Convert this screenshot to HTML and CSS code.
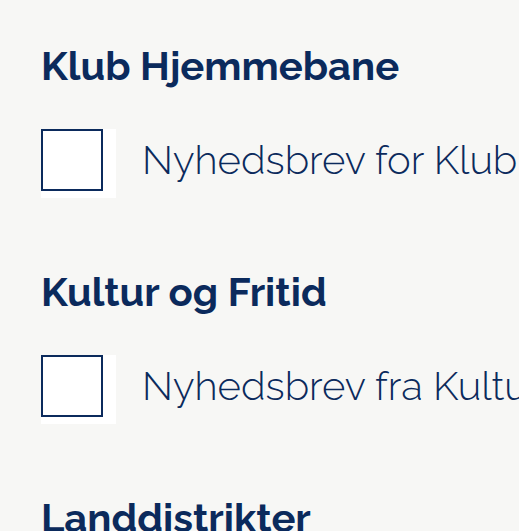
FILE: index.html
```html
<!DOCTYPE html>
<html lang="da">
<head>
<meta charset="utf-8">
<link rel="stylesheet" href="styles.css">
</head>
<body>
<div class="list">
  <section class="group">
    <h2 class="title">Klub Hjemmebane</h2>
    <label class="option">
      <span class="box-wrap"><span class="box"></span></span>
      <span class="label">Nyhedsbrev for Klub Hjemmebane</span>
    </label>
  </section>
  <section class="group">
    <h2 class="title">Kultur og Fritid</h2>
    <label class="option">
      <span class="box-wrap"><span class="box"></span></span>
      <span class="label">Nyhedsbrev fra Kultur og Fritid</span>
    </label>
  </section>
  <section class="group">
    <h2 class="title">Landdistrikter</h2>
  </section>
</div>
</body>
</html>
```

FILE: styles.css
```css
html, body {
  margin: 0;
  padding: 0;
  background: #f7f7f5;
  overflow: hidden;
}
body {
  font-family: "Raleway", "Lato", "Open Sans", sans-serif;
  color: #0b2a5c;
}
.list {
  padding: 42px 0 0 41px;
  display: flex;
  flex-direction: column;
  gap: 70px;
  width: 1000px;
}
.group {
  display: flex;
  flex-direction: column;
  gap: 39px;
}
.title {
  margin: 0;
  font-size: 40px;
  font-weight: 700;
  line-height: 48px;
  white-space: nowrap;
}
.option {
  display: flex;
  align-items: flex-start;
  gap: 26px;
}
.box-wrap {
  background: #ffffff;
  width: 75px;
  height: 69px;
  flex: none;
}
.box {
  display: block;
  width: 62px;
  height: 62px;
  box-sizing: border-box;
  border: 2px solid #0b2a5c;
  background: #ffffff;
}
.label {
  font-size: 40px;
  font-weight: 300;
  line-height: 62px;
  white-space: nowrap;
}
```
